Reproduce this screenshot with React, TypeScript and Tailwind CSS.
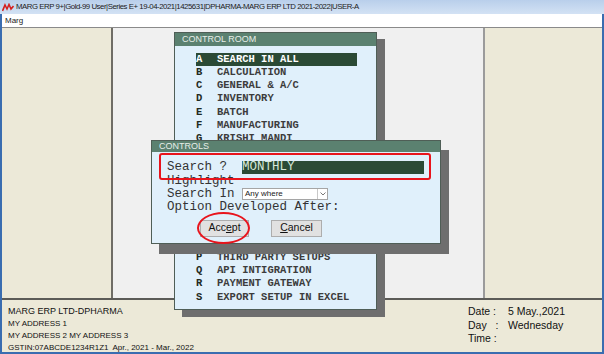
import React from "react";

const mono = { fontFamily: '"Liberation Mono", "Courier New", monospace' };
const sans = { fontFamily: '"Liberation Sans", Arial, sans-serif' };

const items: [string, string][] = [
  ["A", "SEARCH IN ALL"],
  ["B", "CALCULATION"],
  ["C", "GENERAL & A/C"],
  ["D", "INVENTORY"],
  ["E", "BATCH"],
  ["F", "MANUFACTURING"],
  ["G", "KRISHI MANDI"],
  ["H", "HEALTH CARE"],
  ["I", "ORDER MANAGEMENT"],
  ["J", "SMS & EMAIL"],
  ["K", "PRINTING"],
  ["L", "REPORTS"],
  ["M", "SECURITY"],
  ["N", "GST SETUP"],
  ["O", "E-BUSINESS"],
  ["P", "THIRD PARTY SETUPS"],
  ["Q", "API INTIGRATION"],
  ["R", "PAYMENT GATEWAY"],
  ["S", "EXPORT SETUP IN EXCEL"],
];

export default function App() {
  return (
    <div className="relative w-[604px] h-[354px] overflow-hidden bg-[#3a6db0]" style={sans}>
      <div className="flex flex-col w-full h-full pl-[2px] pr-[2px] pb-[2px]">
        {/* title bar */}
        <div className="h-[14px] -mx-[2px] flex items-center bg-gradient-to-b from-[#b9cfeb] to-[#d3e2f4] text-[7.8px] text-[#1b1b1b]">
          <svg width="12" height="9" viewBox="0 0 12 9" className="ml-[2px] mr-[2px]">
            <path d="M0.5 8 L3 2 L5 6 L7 1.5 L9 6 L11.5 3" stroke="#d42020" strokeWidth="1.6" fill="none" />
          </svg>
          <span className="leading-none tracking-[-0.45px]">MARG ERP 9+|Gold-99 User|Series E+ 19-04-2021|1425631|DPHARMA-MARG ERP LTD 2021-2022|USER-A</span>
        </div>
        {/* menu bar */}
        <div className="h-[13px] bg-white flex items-center text-[8px] text-[#222] pl-[3px]">Marg</div>
        {/* main */}
        <div className="flex-1 flex border-t border-[#8a8a8a]">
          <div className="w-[111px] bg-[#ece9d8] border-r-2 border-[#6f6d66]"></div>
          <div className="flex-1 bg-[#f0f0f0]"></div>
          <div className="w-[119px] bg-[#ece9d8] border-l-2 border-[#9b9b9b]"></div>
        </div>
        <div className="h-[2px] bg-[#5c5b57]"></div>
        {/* footer */}
        <div className="h-[52px] bg-[#ece9d8] flex justify-between text-[#111]">
          <div className="pl-[6px] pt-[5px] flex flex-col">
            <div className="text-[9px] leading-[13px]">MARG ERP LTD-DPHARMA</div>
            <div className="text-[8px] leading-[12px]">MY ADDRESS 1</div>
            <div className="text-[8px] leading-[12px]">MY ADDRESS 2 MY ADDRESS 3</div>
            <div className="text-[8px] leading-[12px]">GSTIN:07ABCDE1234R1Z1&nbsp; Apr., 2021 - Mar., 2022</div>
          </div>
          <div className="w-[134px] pt-[5px] text-[10.5px] leading-[13.5px] flex flex-col">
            <div className="flex"><span className="w-[40px]">Date :</span><span>5 May.,2021</span></div>
            <div className="flex"><span className="w-[40px] whitespace-pre">Day   :</span><span>Wednesday</span></div>
            <div className="flex"><span className="w-[40px]">Time :</span></div>
          </div>
        </div>
      </div>

      {/* CONTROL ROOM window */}
      <div className="absolute left-[174px] top-[32px] w-[203px] h-[278px] flex flex-col bg-[#e0f0fb] border border-[#4f5e56] shadow-[8px_7px_0_#6e6e6e]">
        <div className="h-[13px] bg-[#5b8170] text-[#e6eee8] text-[9px] leading-[13px] pl-[7px]">CONTROL ROOM</div>
        <div className="pt-[7px] pl-[21px] pr-[19px] flex flex-col" style={mono}>
          {items.map(([k, v], i) => (
            <div
              key={k}
              className={
                "h-[13.22px] flex items-center text-[10.5px] font-bold whitespace-pre " +
                (i === 0 ? "bg-[#2b4a35] text-white" : "text-[#3c3c3c]")
              }
            >
              <span className={"w-[21px] " + (i === 0 ? "text-white" : "text-[#1e2a22]")}>{k}</span>
              <span>{v}</span>
            </div>
          ))}
        </div>
      </div>

      {/* CONTROLS dialog */}
      <div className="absolute left-[151px] top-[140px] w-[290px] h-[104px] flex flex-col bg-[#e0f0fb] border border-[#4f5e56] shadow-[8px_10px_0_#6e6e6e]">
        <div className="h-[11px] bg-[#5b8170] text-[#e6eee8] text-[9px] leading-[11px] pl-[7px]">CONTROLS</div>
        <div className="pl-[15px] pt-[7px] flex flex-col text-[12.5px] text-[#333]" style={mono}>
          <div className="h-[16px] flex items-center">
            <span className="w-[75px] whitespace-pre">Search ?</span>
            <span className="w-[182px] h-[13px] bg-[#2b4a35] text-[#d6e8d8] leading-[13px]">MONTHLY</span>
          </div>
          <div className="h-[12.5px] flex items-center">Highlight</div>
          <div className="h-[13.5px] flex items-center">
            <span className="w-[75px]">Search In</span>
            <span className="w-[86px] h-[12px] bg-white border border-[#a5a5a5] flex items-center justify-between" style={sans}>
              <span className="text-[8px] text-[#222] pl-[2px] leading-none">Any where</span>
              <span className="w-[10px] h-[10px] border-l border-[#c8c8c8] flex items-center justify-center">
                <svg width="6" height="4" viewBox="0 0 6 4"><path d="M0.5 0.5 L3 3 L5.5 0.5" stroke="#777" strokeWidth="1" fill="none" /></svg>
              </span>
            </span>
          </div>
          <div className="h-[13.5px] flex items-center">Option Developed After:</div>
          <div className="flex mt-[5px] ml-[33px] gap-[22px]" style={sans}>
            <div className="w-[49px] h-[17px] bg-[#e1e1e1] border border-[#adadad] flex items-center justify-center text-[10.5px] text-[#111]">
              Acc<span className="underline">e</span>pt
            </div>
            <div className="w-[51px] h-[17px] bg-[#e1e1e1] border border-[#adadad] flex items-center justify-center text-[10.5px] text-[#111]">
              <span className="underline">C</span>ancel
            </div>
          </div>
        </div>
        {/* red annotations */}
        <div className="absolute left-[7px] top-[12px] w-[272px] h-[27px] border-[2.5px] border-[#e8141c] rounded-[3px]"></div>
        <div className="absolute left-[45px] top-[71px] w-[53px] h-[32px] border-[2px] border-[#e8141c] rounded-[50%]"></div>
      </div>
    </div>
  );
}
